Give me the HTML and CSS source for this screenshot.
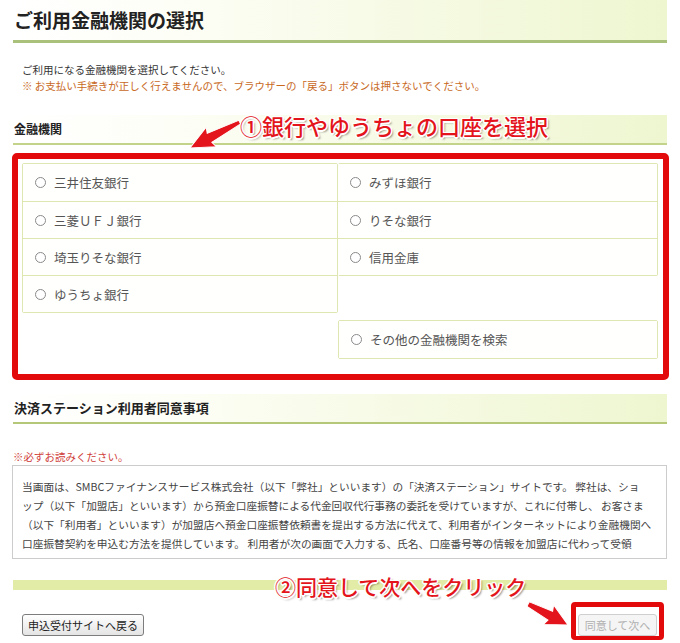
FILE: index.html
```html
<!DOCTYPE html>
<html lang="ja">
<head>
<meta charset="utf-8">
<title>ご利用金融機関の選択</title>
<link rel="stylesheet" href="styles.css">
</head>
<body>
<div class="page">
  <h1 class="title">ご利用金融機関の選択</h1>
  <div class="intro">
    <p>ご利用になる金融機関を選択してください。</p>
    <p class="warn">※ お支払い手続きが正しく行えませんので、ブラウザーの「戻る」ボタンは押さないでください。</p>
  </div>

  <h2 class="sec">金融機関</h2>
  <div class="banks">
    <ul class="list list-left">
      <li class="item"><span class="radio"></span>三井住友銀行</li>
      <li class="item"><span class="radio"></span>三菱ＵＦＪ銀行</li>
      <li class="item"><span class="radio"></span>埼玉りそな銀行</li>
      <li class="item"><span class="radio"></span>ゆうちょ銀行</li>
    </ul>
    <ul class="list list-right">
      <li class="item"><span class="radio"></span>みずほ銀行</li>
      <li class="item"><span class="radio"></span>りそな銀行</li>
      <li class="item"><span class="radio"></span>信用金庫</li>
    </ul>
    <ul class="list list-other">
      <li class="item"><span class="radio"></span>その他の金融機関を検索</li>
    </ul>
  </div>

  <h2 class="sec sec2">決済ステーション利用者同意事項</h2>
  <p class="must">※必ずお読みください。</p>
  <div class="terms">当画面は、SMBCファイナンスサービス株式会社（以下「弊社」といいます）の「決済ステーション」サイトです。 弊社は、ショ<br>ップ（以下「加盟店」といいます）から預金口座振替による代金回収代行事務の委託を受けていますが、これに付帯し、 お客さま<br>（以下「利用者」といいます）が加盟店へ預金口座振替依頼書を提出する方法に代えて、利用者がインターネットにより金融機関へ<br>口座振替契約を申込む方法を提供しています。 利用者が次の画面で入力する、氏名、口座番号等の情報を加盟店に代わって受領<br>し、金融機関に提供します。</div>

  <div class="bar"></div>
  <div class="actions">
    <button class="btn btn-back" type="button">申込受付サイトへ戻る</button>
    <div class="highlight">
      <button class="btn btn-next" type="button" disabled>同意して次へ</button>
    </div>
  </div>

  <div class="note note1">①銀行やゆうちょの口座を選択</div>
  <div class="note note2">②同意して次へをクリック</div>

  <svg class="arrow arrow1" width="60" height="40" viewBox="0 0 60 40">
    <g transform="translate(5 33) rotate(152.5)">
      <polygon points="-56,-2 -22,-5 -24,-11 0,0 -24,11 -22,5 -56,2" fill="#e3141b" stroke="#ffffff" stroke-width="1"/>
    </g>
  </svg>
  <svg class="arrow arrow2" width="56" height="34" viewBox="0 0 56 34">
    <g transform="translate(48 27) rotate(27.7)">
      <polygon points="-45,-2.5 -20,-5 -22,-11 0,0 -22,11 -20,5 -45,2.5" fill="#e3141b" stroke="#ffffff" stroke-width="1"/>
    </g>
  </svg>
</div>
</body>
</html>
```

FILE: styles.css
```css
* { box-sizing: border-box; }

html, body {
  margin: 0;
  padding: 0;
  background: #ffffff;
}

body {
  font-family: "Noto Sans CJK JP", "Noto Sans", sans-serif;
  color: #333333;
}

.page {
  position: relative;
  width: 680px;
  height: 643px;
  padding: 0 13px;
  overflow: hidden;
}

.title {
  margin: 0;
  height: 43px;
  padding-left: 1px;
  font-size: 19px;
  line-height: 40px;
  font-weight: 700;
  color: #222222;
  background: linear-gradient(to right, #ffffff 0%, #fdfef6 25%, #eef6d0 100%);
  border-bottom: 3px solid #a9c17a;
}

.intro {
  margin-top: 19px;
  padding-left: 9px;
}

.intro p {
  margin: 0;
  font-size: 10.5px;
  line-height: 16px;
  color: #333333;
}

.intro .warn {
  color: #c8691e;
}

.sec {
  margin: 21px 0 0;
  height: 30px;
  padding-left: 1px;
  font-size: 12px;
  line-height: 28px;
  font-weight: 700;
  color: #222222;
  background: linear-gradient(to right, #ffffff 0%, #fdfef6 25%, #eef6d0 100%);
  border-bottom: 2px solid #c3d48a;
}

.sec2 {
  margin-top: 14px;
  font-size: 13px;
  border-bottom-color: #b5c87a;
}

.banks {
  margin: 8px -2px 0 -1px;
  border: 6px solid #e20a0a;
  border-radius: 5px;
  padding: 4px 5px 15px 4px;
  display: grid;
  grid-template-columns: 316px 320px;
  row-gap: 7px;
  align-items: start;
  background: #ffffff;
}

.list {
  list-style: none;
  margin: 0;
  padding: 0;
  border: 1px solid #dfe6b2;
  border-radius: 2px;
}

.list-right {
  border-left: none;
}

.list-other {
  grid-column: 2;
}

.item {
  display: flex;
  align-items: center;
  height: 37px;
  padding-left: 12px;
  font-size: 12.5px;
  color: #555555;
  background: #fffffd;
}

.item + .item {
  border-top: 1px solid #dfe6b2;
}

.radio {
  width: 11px;
  height: 11px;
  border: 1px solid #8a8a8a;
  border-radius: 50%;
  margin-right: 8px;
  flex: none;
  background: #ffffff;
}

.must {
  margin: 25px 0 0;
  font-size: 10.5px;
  line-height: 16px;
  color: #d0403a;
}

.terms {
  height: 94px;
  margin: 0 0 0 -1px;
  border: 1px solid #cccccc;
  padding: 11px 6px 0 9px;
  font-size: 10.7px;
  line-height: 19px;
  color: #444444;
  overflow: hidden;
  white-space: nowrap;
}

.bar {
  margin-top: 21px;
  height: 10px;
  background: #e2eca6;
}

.actions {
  margin-top: 12px;
  display: flex;
  justify-content: space-between;
  align-items: flex-end;
  padding-left: 9px;
  margin-right: 3px;
}

.btn {
  font-family: "Noto Sans CJK JP", "Noto Sans", sans-serif;
  font-size: 11px;
  height: 22px;
  line-height: 18px;
  padding: 0 5px;
  border-radius: 3px;
}

.btn-back {
  margin-bottom: 4px;
  color: #222222;
  border: 1px solid #7d7d7d;
  background: linear-gradient(#ffffff, #e4e4e4);
}

.highlight {
  border: 5px solid #e20a0a;
  border-bottom-width: 4px;
  border-radius: 4px;
  padding: 4px 2px 0 2px;
  background: #ffffff;
}

.btn-next {
  width: 79px;
  color: #b0b0b0;
  border: 1px solid #cfcfcf;
  background: #f5f5f5;
}

.note {
  position: absolute;
  font-weight: 500;
  color: #e3141b;
  white-space: nowrap;
  text-shadow:
    1.5px 0 0 #fff, -1.5px 0 0 #fff, 0 1.5px 0 #fff, 0 -1.5px 0 #fff,
    1px 1px 0 #fff, -1px -1px 0 #fff, 1px -1px 0 #fff, -1px 1px 0 #fff,
    2px 2px 2px rgba(0, 0, 0, 0.45);
}

.note1 {
  left: 240px;
  top: 109px;
  font-size: 22px;
  line-height: 32px;
}

.note2 {
  left: 275px;
  top: 570px;
  font-size: 21px;
  line-height: 32px;
}

.arrow {
  position: absolute;
  overflow: visible;
}

.arrow1 {
  left: 185px;
  top: 115px;
}

.arrow2 {
  left: 520px;
  top: 598px;
}
```
